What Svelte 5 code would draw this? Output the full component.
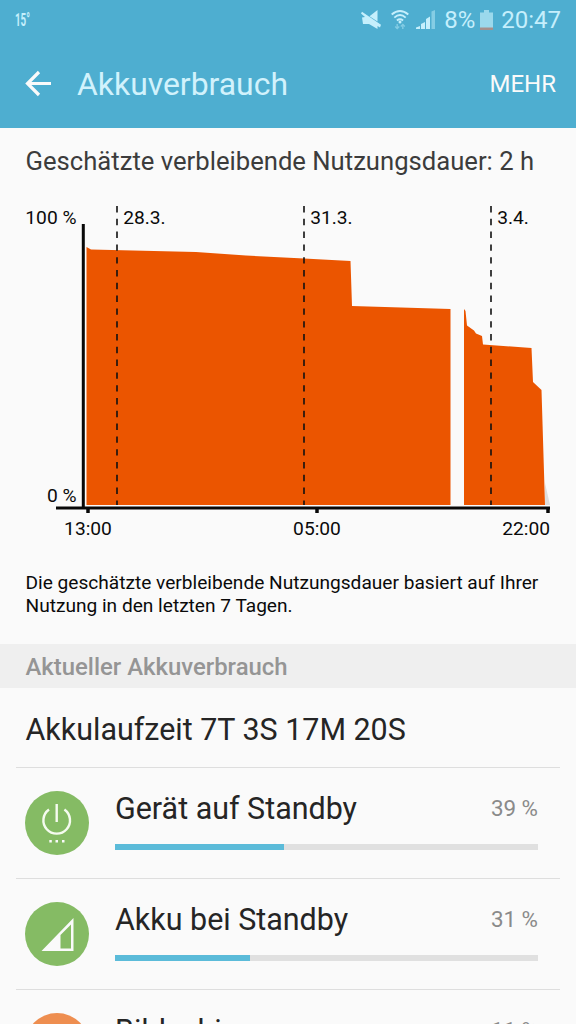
<script>
  const remaining = '2 h';
  const runtime = '7T 3S 17M 20S';

  const days = [
    { x: 117, label: '28.3.' },
    { x: 304, label: '31.3.' },
    { x: 491, label: '3.4.' },
  ];
  const hours = [
    { x: 88, label: '13:00' },
    { x: 317, label: '05:00' },
    { x: 548, label: '22:00' },
  ];
  const apps = [
    { name: 'Gerät auf Standby', percent: 39, bar: 40, icon: 'power' },
    { name: 'Akku bei Standby', percent: 31, bar: 32, icon: 'signal' },
    { name: 'Bildschirm', percent: 11, bar: 11, icon: 'display' },
  ];
</script>

<div class="screen">
  <div class="status">
    <span class="temp">15°</span>
    <div class="status--icons">
      <svg class="mute" width="22" height="22" viewBox="0 0 22 22">
        <path d="M17.500 1v11.500L9.500 7.200zM2 8.500l3-.500L1 4.500l1-1.700 19 13-1 2.700-2.500-1.500v3L9 15H3z" />
      </svg>
      <svg class="wifi" width="20" height="22" viewBox="0 0 20 22">
        <path d="M1.700 5.500q8.300-7 16.600 0M4.300 8.600q5.700-5 11.400 0M6.900 11.500q3.100-2.500 6.200 0" />
        <circle cx="10" cy="13" r="1.500" />
        <path class="dim" d="M7.200 15v4.500M12.800 15.500V20" />
        <path class="dim" d="M5.200 17.500l2 2 2-2M10.800 17.500l2-2 2 2" />
      </svg>
      <svg class="bars" width="20" height="20" viewBox="0 0 20 20">
        <path d="M0 17.500l4-1.500v3H0zM5 14l4-2v7H5zM10 9l4-2.500V19h-4z" />
        <path class="dim" d="M15.500 1.500L19 0v19h-3.500z" />
      </svg>
      <span class="level">8%</span>
      <svg class="battery" width="13" height="20" viewBox="0 0 13 20">
        <path d="M4 0h5v2.500h4V18H0V2.500h4z" />
        <path class="low" d="M0 17.500h13V20H0z" />
      </svg>
      <span class="clock">20:47</span>
    </div>
  </div>

  <header>
    <svg width="28" height="28" viewBox="0 0 28 28">
      <path d="M26 13.500H3M14 2L2.500 13.500 14 25" />
    </svg>
    <h1>Akkuverbrauch</h1>
    <button>MEHR</button>
  </header>

  <h2>Geschätzte verbleibende Nutzungsdauer: {remaining}</h2>

  <svg class="chart" width="576" height="360" viewBox="0 192 576 360">
    <path class="forecast" d="M545 483l5 22h-5z" />
    <path
      class="usage"
      d="M86.500 505V247l4.500 2.500 105 2.500 50 3.500 58 3 46.500 2.500 1.500 45 98.500 3v196z"
    />
    <path
      class="usage"
      d="M464 505V309l1.500 2 1.500 14.500 7 5 2 3 6 2.500 1 8.500 48.500 3.500 1.500 34 8.500 8 3.500 115z"
    />
    <path class="axis" d="M83.300 224v284M56 508h494" />
    {#each days as day}
      <path class="day" d="M{day.x} 206v299" />
      <text x={day.x + 6.2} y="224">{day.label}</text>
    {/each}
    {#each hours as hour}
      <path class="tick" d="M{hour.x} 508v5" />
      <text
        x={hour.x === 548 ? 550 : hour.x}
        y="535"
        text-anchor={hour.x === 548 ? 'end' : 'middle'}>{hour.label}</text
      >
    {/each}
    <text x="76.500" y="224" text-anchor="end">100 %</text>
    <text x="76.500" y="502" text-anchor="end">0 %</text>
  </svg>

  <p class="hint">
    Die geschätzte verbleibende Nutzungsdauer basiert auf Ihrer<br />
    Nutzung in den letzten 7 Tagen.
  </p>

  <h3>Aktueller Akkuverbrauch</h3>
  <div class="runtime">Akkulaufzeit {runtime}</div>

  <ul>
    {#each apps as app}
      <li>
        <svg class="icon {app.icon}" width="64" height="64" viewBox="0 0 64 64">
          <circle class="disc" cx="32" cy="32" r="32" />
          {#if app.icon === 'power'}
            <path d="M31.700 13v18M24 18.500a13.300 13.300 0 1 0 15.400 0" />
            <path class="fill" d="M24.300 49h2.500v2.500h-2.500zM30.500 49h2.500v2.500h-2.500zM37 49h2.500v2.500H37z" />
          {:else if app.icon === 'signal'}
            <path class="fill" fill-rule="evenodd" d="M16.500 49L48.500 16v33zM35.500 33v13.500H46V22.500z" />
          {:else}
            <path d="M18 20h28v20H18zM26 46h12" />
          {/if}
        </svg>
        <div class="app">
          <div class="app--head">
            <span class="name">{app.name}</span>
            <span class="percent">{app.percent} %</span>
          </div>
          <div class="track"><div class="bar" style="width: {app.bar}%"></div></div>
        </div>
      </li>
    {/each}
  </ul>
</div>

<style>
  :global(body) {
    background: #fafafa;
  }
  .screen {
    background: #fafafa;
    color: #252525;
    font-family: Roboto, sans-serif;
    height: 1024px;
    overflow: hidden;
    width: 576px;
  }
  .status {
    align-items: center;
    background: #4eaed0;
    box-sizing: border-box;
    color: #c5effc;
    display: flex;
    height: 40px;
    justify-content: space-between;
    padding: 0 15px;
  }
  .temp {
    font-size: 17.5px;
    font-weight: 700;
    transform: scaleX(0.56);
    transform-origin: left;
  }
  .status--icons {
    align-items: center;
    display: flex;
  }
  .status svg {
    fill: #c5effc;
  }
  .status .mute {
    margin-right: 8px;
  }
  .status .wifi {
    margin-right: 6px;
  }
  .wifi path {
    fill: none;
    stroke: #c5effc;
    stroke-width: 1.9;
  }
  .wifi .dim {
    stroke: #83cce4;
    stroke-width: 1.4;
  }
  .status .bars {
    margin-right: 8px;
  }
  .bars .dim {
    fill: #85cde4;
  }
  .level,
  .clock {
    font-size: 24px;
  }
  .status .battery {
    fill: #9bd9ec;
    margin: 0 8px 0 5px;
  }
  .status .low {
    fill: #a5908c;
  }
  header {
    align-items: center;
    background: #4eaed0;
    box-sizing: border-box;
    color: #fafafa;
    display: flex;
    height: 88px;
    padding: 0 20px 0 25px;
  }
  header svg path {
    fill: none;
    stroke: #fafafa;
    stroke-width: 3.2;
  }
  h1 {
    color: #d1f2fc;
    font-size: 31.9px;
    font-weight: 400;
    margin: 0 auto 0 24px;
  }
  button {
    background: none;
    border: 0;
    color: #fafafa;
    font: 24px Roboto, sans-serif;
    padding: 0;
  }
  h2 {
    color: #3c3c3c;
    font-size: 25.65px;
    font-weight: 400;
    height: 64px;
    line-height: 66px;
    margin: 0;
    padding-left: 25.5px;
    white-space: nowrap;
  }
  .chart {
    display: block;
  }
  .chart text {
    fill: #0a0a0a;
    font-size: 19.2px;
  }
  .usage {
    fill: #eb5500;
  }
  .forecast {
    fill: #dedede;
  }
  .axis {
    fill: none;
    stroke: #080808;
    stroke-width: 3;
  }
  .tick {
    stroke: #080808;
    stroke-width: 3.5;
  }
  .day {
    stroke: #111;
    stroke-dasharray: 6.4 6.4;
    stroke-width: 1.6;
  }
  .hint {
    color: #0a0a0a;
    font-size: 19.12px;
    height: 73px;
    line-height: 23px;
    margin: 0;
    padding: 19px 0 0 25.5px;
    white-space: nowrap;
  }
  h3 {
    background: #efefef;
    color: #959595;
    font-size: 23.9px;
    font-weight: 500;
    height: 44px;
    line-height: 46px;
    margin: 0;
    padding-left: 25.5px;
  }
  .runtime {
    box-sizing: border-box;
    font-size: 30.45px;
    height: 79px;
    line-height: 84px;
    padding-left: 25.5px;
  }
  ul {
    list-style: none;
    margin: 0 16px;
    padding: 0;
  }
  li {
    border-top: 1px solid #dedede;
    box-sizing: border-box;
    display: flex;
    gap: 26px;
    height: 111.2px;
    padding: 23px 22px 0 9px;
  }
  .icon {
    flex: none;
  }
  .icon path {
    fill: none;
    stroke: #f5fbef;
    stroke-width: 2.4;
  }
  .icon .fill {
    fill: #fafafa;
    stroke: none;
  }
  .disc {
    fill: #85bb64;
  }
  .display .disc {
    fill: #ee8e50;
  }
  .app {
    flex-grow: 1;
  }
  .app--head {
    display: flex;
    height: 53px;
    justify-content: space-between;
    line-height: 35px;
  }
  .name {
    font-size: 30.45px;
  }
  .percent {
    color: #8a8a8a;
    font-size: 22.4px;
  }
  .track {
    background: #e0e0e0;
    height: 6px;
  }
  .bar {
    background: #5bbbd9;
    height: 6px;
  }
</style>
